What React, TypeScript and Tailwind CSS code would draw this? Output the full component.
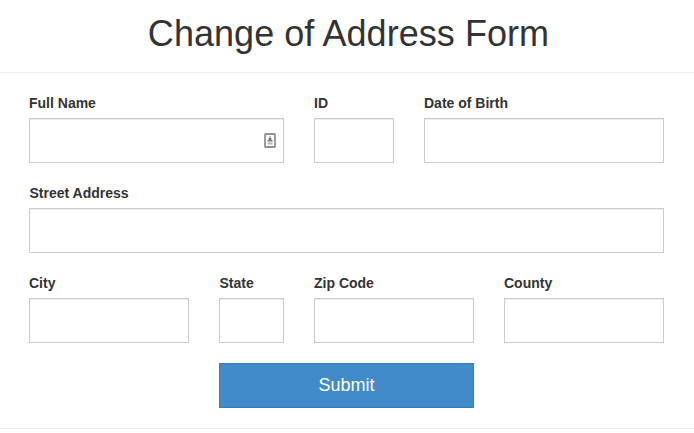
type FieldProps = { label: string; className: string; name: string; card?: boolean; labelClass?: string };

function ContactIcon() {
  return (
    <svg className="pointer-events-none absolute top-[15px] right-[8px]" width="12" height="15" viewBox="0 0 12 15">
      <rect x="1" y="1" width="10" height="13" rx="0.6" fill="#fff" stroke="#929292" strokeWidth="1.8" />
      <path d="M5.5 3h1v2h1v2h1v1.5h-5V7h1V5h1z" fill="#7d7d7d" />
      <path d="M3.5 9.5h5v2h-5z" fill="#b4b4b4" />
    </svg>
  );
}

function Field({ label, className, name, card, labelClass = "" }: FieldProps) {
  return (
    <div className={className}>
      <label htmlFor={name} className={`mb-[5px] block text-[14px] leading-5 font-bold ${labelClass}`}>
        {label}
      </label>
      <div className="relative">
        <input
          id={name}
          className="block h-[45px] w-full border border-[#ccc] bg-white px-4 text-lg shadow-[inset_0_1px_1px_rgba(0,0,0,0.075)] outline-none"
        />
        {card && <ContactIcon />}
      </div>
    </div>
  );
}

export default function App() {
  return (
    <main className="h-[433px] w-[694px] overflow-hidden bg-white font-['Liberation_Sans',Arial,sans-serif] text-[#333]">
      <h1 className="pt-[14px] pl-[3px] text-center text-[36px] leading-[40px] tracking-[0.05px]">
        Change of Address Form
      </h1>
      <hr className="mt-[18px] border-t border-[#eee]" />
      <form className="px-[29px] pt-5" onSubmit={(e) => e.preventDefault()}>
        <div className="flex gap-[30px]">
          <Field label="Full Name" name="full" className="w-[255px]" card />
          <Field label="ID" name="id" className="w-[80px]" />
          <Field label="Date of Birth" name="dob" className="w-[240px]" />
        </div>
        <Field label="Street Address" name="street" className="mt-5 w-[635px]" labelClass="pl-[0.5px]" />
        <div className="mt-5 flex gap-[30px]">
          <Field label="City" name="city" className="w-[160px]" />
          <Field label="State" name="state" className="w-[65px]" labelClass="pl-[0.5px]" />
          <Field label="Zip Code" name="zip" className="w-[160px]" />
          <Field label="County" name="county" className="w-[160px]" />
        </div>
        <button className="mt-5 ml-[190px] block h-[45px] w-[255px] border border-[#357ebd] bg-[#428bca] text-[18px] text-white">
          Submit
        </button>
      </form>
      <hr className="mt-5 border-t border-[#eee]" />
    </main>
  );
}
